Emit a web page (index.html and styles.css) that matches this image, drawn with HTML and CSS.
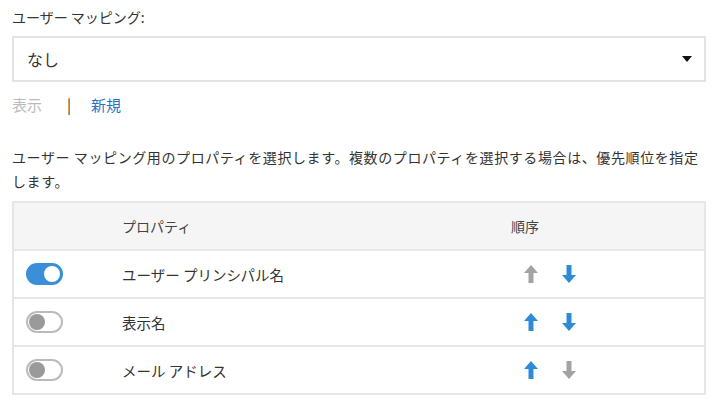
FILE: index.html
```html
<!DOCTYPE html>
<html lang="ja">
<head>
    <meta charset="UTF-8">
    <meta name="viewport" content="width=device-width, initial-scale=1.0">
    <title>ユーザー マッピング</title>
    <link rel="stylesheet" href="styles.css">
</head>
<body>
    <div class="panel">
        <div class="field-label">ユーザー マッピング:</div>
        <div class="select">
            <span>なし</span>
            <span class="caret"></span>
        </div>
        <div class="links">
            <span class="link disabled">表示</span>
            <span class="sep">|</span>
            <span class="link">新規</span>
        </div>
        <p class="desc">ユーザー マッピング用のプロパティを選択します。複数のプロパティを選択する場合は、優先順位を指定します。</p>

        <div class="table">
            <div class="row head">
                <div class="c-toggle"></div>
                <div class="c-name">プロパティ</div>
                <div class="c-order">順序</div>
            </div>
            <div class="row">
                <div class="c-toggle"><span class="toggle on"></span></div>
                <div class="c-name">ユーザー プリンシパル名</div>
                <div class="c-order">
                    <svg class="arrow off" viewBox="0 0 14 18"><path d="M7 0 L14 8 H9.5 V18 H4.5 V8 H0 Z"/></svg>
                    <svg class="arrow" viewBox="0 0 14 18"><path d="M7 18 L14 10 H9.5 V0 H4.5 V10 H0 Z"/></svg>
                </div>
            </div>
            <div class="row">
                <div class="c-toggle"><span class="toggle"></span></div>
                <div class="c-name">表示名</div>
                <div class="c-order">
                    <svg class="arrow" viewBox="0 0 14 18"><path d="M7 0 L14 8 H9.5 V18 H4.5 V8 H0 Z"/></svg>
                    <svg class="arrow" viewBox="0 0 14 18"><path d="M7 18 L14 10 H9.5 V0 H4.5 V10 H0 Z"/></svg>
                </div>
            </div>
            <div class="row">
                <div class="c-toggle"><span class="toggle"></span></div>
                <div class="c-name">メール アドレス</div>
                <div class="c-order">
                    <svg class="arrow" viewBox="0 0 14 18"><path d="M7 0 L14 8 H9.5 V18 H4.5 V8 H0 Z"/></svg>
                    <svg class="arrow off" viewBox="0 0 14 18"><path d="M7 18 L14 10 H9.5 V0 H4.5 V10 H0 Z"/></svg>
                </div>
            </div>
        </div>
    </div>
</body>
</html>
```

FILE: styles.css
```css
body {
    margin: 0;
    background: white;
    color: #333;
    font-family: "Noto Sans CJK JP", "Noto Sans", sans-serif;
    font-size: 15px;
}
.panel {
    padding: 4px 15px 0 12px;
}
.field-label {
    font-size: 14px;
    line-height: 26px;
    height: 26px;
}
.select {
    margin-top: 6px;
    height: 42px;
    border: 2px solid #e3e3e3;
    display: flex;
    align-items: center;
    justify-content: space-between;
    padding: 0 12px 0 13px;
    font-size: 16px;
}
.caret {
    width: 0;
    height: 0;
    border-left: 5px solid transparent;
    border-right: 5px solid transparent;
    border-top: 6px solid #111;
}
.links {
    margin-top: 9px;
    line-height: 28px;
    display: flex;
}
.link {
    color: #2a73c2;
}
.link.disabled {
    color: #bbb;
}
.sep {
    margin: 0 20px 0 25px;
    color: #333;
}
.desc {
    margin: 26px 0 0;
    font-size: 14px;
    line-height: 24px;
    letter-spacing: 0.6px;
    color: #333;
}
.table {
    margin-top: 8px;
    border: 2px solid #e6e6e6;
}
.row {
    display: flex;
    align-items: center;
    height: 46px;
    border-top: 2px solid #e6e6e6;
    font-size: 14.5px;
}
.row.head {
    border-top: none;
    background: #f5f5f5;
    color: #444;
    font-size: 14px;
}
.c-toggle {
    width: 108px;
    padding-left: 12px;
    box-sizing: border-box;
    display: flex;
    align-items: center;
}
.c-name {
    width: 389px;
}
.c-order {
    display: flex;
    align-items: center;
    gap: 24px;
    padding-left: 13px;
}
.row.head .c-order {
    padding-left: 0;
}
.toggle {
    display: inline-block;
    position: relative;
    width: 33px;
    height: 18px;
    border: 2px solid #bbb;
    border-radius: 11px;
    background: white;
}
.toggle::after {
    content: "";
    position: absolute;
    left: 1px;
    top: 1px;
    width: 16px;
    height: 16px;
    border-radius: 50%;
    background: #9a9a9a;
}
.toggle.on {
    background: #3a8fd8;
    border-color: #3a8fd8;
}
.toggle.on::after {
    left: auto;
    right: 1px;
    background: white;
}
.arrow {
    width: 14px;
    height: 18px;
    fill: #2e8bd6;
}
.arrow.off {
    fill: #a3a3a3;
}
```
